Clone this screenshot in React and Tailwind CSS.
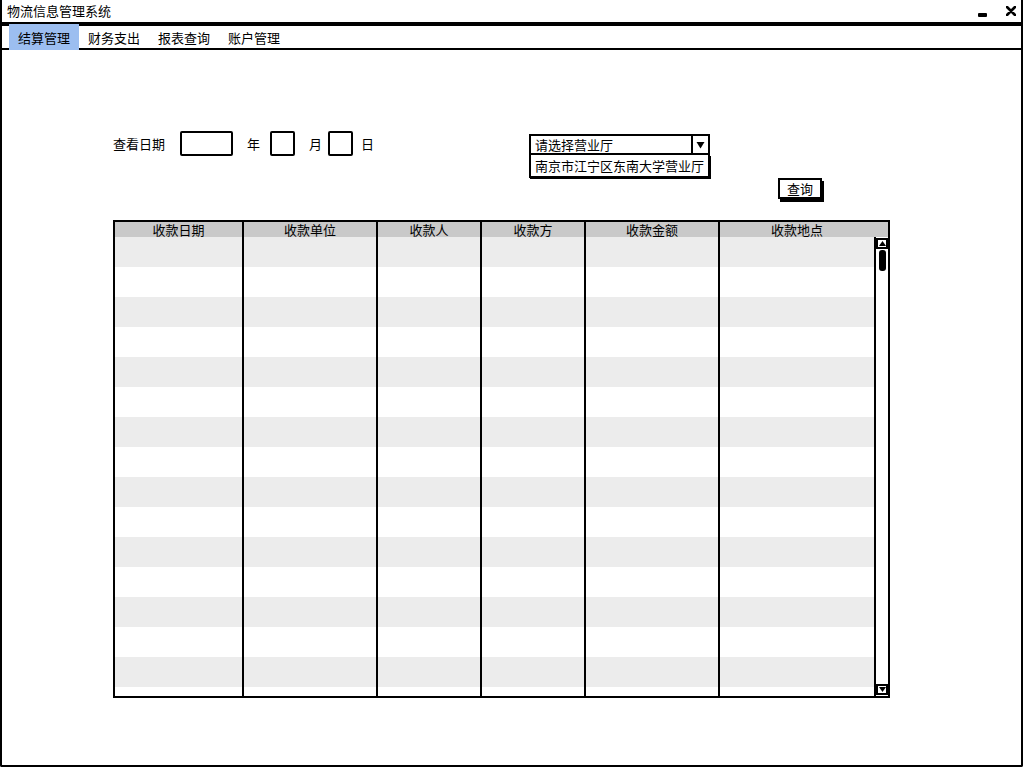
import React from 'react';

const columns = [
  { label: '收款日期', w: 'w-[129px]' },
  { label: '收款单位', w: 'w-[134px]' },
  { label: '收款人', w: 'w-[104px]' },
  { label: '收款方', w: 'w-[104px]' },
  { label: '收款金额', w: 'w-[134px]' },
];

const menus = ['结算管理', '财务支出', '报表查询', '账户管理'];

function DateBox({ wide }) {
  return (
    <div
      className={`${wide ? 'w-[53px]' : 'w-[25px]'} h-[25px] border-2 border-black rounded-[2px] bg-white`}
    />
  );
}

function App() {
  const rows = Array.from({ length: 16 }, (_, i) => i);

  return (
    <div
      className="w-[1024px] h-[768px] bg-white text-black text-[13px] leading-none overflow-hidden"
      style={{ fontFamily: '"Noto Sans CJK SC", "Noto Sans", sans-serif' }}
    >
      <div className="w-[1023px] h-[767px] border-x-2 border-b-2 border-black rounded-b-[2px] flex flex-col">
        {/* Title bar */}
        <div className="h-[24px] border-b-2 border-black flex items-center justify-between pl-[5px] pr-[5px]">
          <span className="pb-[1px]">物流信息管理系统</span>
          <div className="flex items-start gap-[19px] h-full pt-[6px]">
            <div className="w-[9px] h-[4px] bg-black mt-[7px] rounded-[1px]" />
            <svg width="10" height="10" viewBox="0 0 10 10">
              <path d="M1 1 L9 9 M9 1 L1 9" stroke="#000" strokeWidth="2.6" strokeLinecap="round" />
            </svg>
          </div>
        </div>

        {/* Menu bar */}
        <div className="h-[26px] border-y-2 border-black flex items-stretch pl-[7px]">
          {menus.map((m, i) => (
            <div
              key={m}
              className={`flex items-center justify-center px-[9px] ${
                i === 0 ? 'bg-[#9cbef0] -mt-[2px] -mb-[2px] w-[70px]' : ''
              }`}
            >
              {m}
            </div>
          ))}
        </div>

        {/* Content */}
        <div className="flex-1 pl-[111px] pt-[81px]">
          <div className="flex items-start">
            <div className="w-[416px] flex items-center h-[25px]">
              <span>查看日期</span>
              <div className="ml-[15px]">
                <DateBox wide />
              </div>
              <span className="ml-[14px]">年</span>
              <div className="ml-[10px]">
                <DateBox />
              </div>
              <span className="ml-[14px]">月</span>
              <div className="ml-[6px]">
                <DateBox />
              </div>
              <span className="ml-[8px]">日</span>
            </div>

            <div className="mt-[3px] w-[181px]">
              <div className="h-[21px] border-2 border-black flex items-stretch bg-white">
                <div className="flex-1 flex items-center pl-[4px]">请选择营业厅</div>
                <div className="w-[17px] border-l-2 border-black flex items-center justify-center">
                  <svg width="9" height="8" viewBox="0 0 9 8">
                    <path d="M0.5 1 L8.5 1 L4.5 7.5 Z" fill="#000" />
                  </svg>
                </div>
              </div>
              <div className="h-[23px] border-x-2 border-b-2 border-black flex items-center pl-[4px] shadow-[1px_1px_0_#000]">
                南京市江宁区东南大学营业厅
              </div>
            </div>
          </div>

          <div className="pl-[665px]">
            <div className="w-[44px] h-[21px] border-2 border-black bg-white flex items-center justify-center shadow-[2px_3px_0_#000]">
              查询
            </div>
          </div>

          {/* Table */}
          <div className="mt-[21px] w-[777px] h-[478px] border-2 border-black flex flex-col overflow-hidden">
            <div className="h-[15px] bg-[#c9c9c9] flex shrink-0">
              {columns.map((c) => (
                <div
                  key={c.label}
                  className={`${c.w} border-r-2 border-black flex items-center justify-center`}
                >
                  {c.label}
                </div>
              ))}
              <div className="flex-1 flex items-center justify-center pr-[14px]">收款地点</div>
            </div>

            <div className="flex-1 flex overflow-hidden">
              <div className="flex-1 flex flex-col overflow-hidden">
                {rows.map((r) => (
                  <div
                    key={r}
                    className={`h-[30px] shrink-0 flex ${r % 2 === 0 ? 'bg-[#ececec]' : 'bg-white'}`}
                  >
                    {columns.map((c) => (
                      <div key={c.label} className={`${c.w} border-r-2 border-black`} />
                    ))}
                    <div className="flex-1" />
                  </div>
                ))}
              </div>

              {/* Scrollbar */}
              <div className="w-[14px] border-l-2 border-black bg-white flex flex-col justify-between py-[1px]">
                <div className="flex flex-col items-center">
                  <div className="w-[12px] h-[11px] border-2 border-black flex items-center justify-center">
                    <svg width="7" height="5" viewBox="0 0 7 5">
                      <path d="M0 5 L7 5 L3.5 0 Z" fill="#000" />
                    </svg>
                  </div>
                  <div className="w-[7px] h-[21px] bg-black rounded-[3px] mt-[1px]" />
                </div>
                <div className="w-[12px] h-[11px] border-2 border-black flex items-center justify-center">
                  <svg width="7" height="5" viewBox="0 0 7 5">
                    <path d="M0 0 L7 0 L3.5 5 Z" fill="#000" />
                  </svg>
                </div>
              </div>
            </div>
          </div>
        </div>
      </div>
    </div>
  );
}

export default App;
